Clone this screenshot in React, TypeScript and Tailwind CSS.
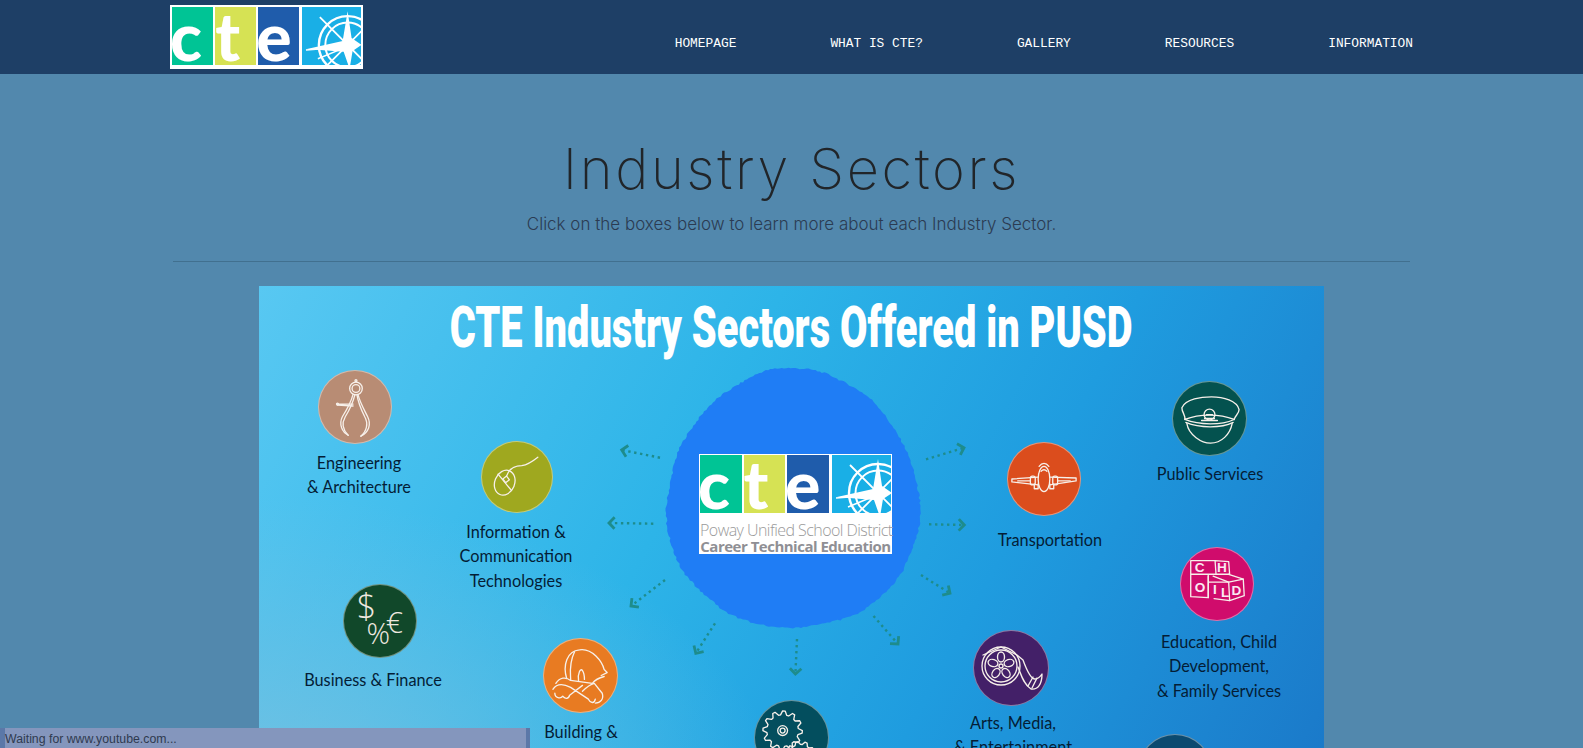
import React from "react";

const navItems = ["HOMEPAGE", "WHAT IS CTE?", "GALLERY", "RESOURCES", "INFORMATION"];

function Compass() {
  const cx = 46;
  const cy = 38;
  return (
    <svg viewBox="0 0 59 58" className="absolute inset-0 w-full h-full">
      <g fill="none" stroke="#fff">
        <circle cx={cx} cy={cy} r="29" strokeWidth="2.4" />
        <circle cx={cx} cy={cy} r="22.5" strokeWidth="2" />
        <path d="M18 10 L60 52 M18 66 L60 24" strokeWidth="1.8" />
        <path d="M4 43 L44 40 M16 52 L40 42" strokeWidth="1.5" />
      </g>
      <polygon points="46,4 50,31 60,38 51,44 48,62 42,45 5,42 41,34" fill="#fff" />
    </svg>
  );
}

function Tiles() {
  const letter = "absolute font-['Lato',sans-serif] font-black text-white text-[66px] leading-[58px]";
  return (
    <div className="flex h-[58px] w-full">
      <div className="relative w-[41.5px] h-full bg-[#00c495]">
        <span className={`${letter} -left-[2px] top-[0px]`}>c</span>
      </div>
      <div className="relative ml-[2px] w-[41.5px] h-full bg-[#d6e254]">
        <span className={`${letter} left-[0px] top-[0px]`}>t</span>
      </div>
      <div className="relative ml-[2px] w-[41.5px] h-full bg-[#1f5cab]">
        <span className={`${letter} -left-[2px] top-[0px]`}>e</span>
      </div>
      <div className="relative ml-[3px] w-[59px] h-full bg-[#19afe6] overflow-hidden">
        <Compass />
      </div>
    </div>
  );
}

function Sketch({ children }: { children: React.ReactNode }) {
  return (
    <svg viewBox="-37 -37 74 74" className="w-full h-full" fill="none" stroke="#f7f0ea" strokeWidth="1.35" strokeLinecap="round" strokeLinejoin="round">
      {children}
    </svg>
  );
}

function gearPath(cx: number, cy: number, r: number, teeth: number) {
  const pts: string[] = [];
  for (let i = 0; i < teeth * 4; i++) {
    const a = (i / (teeth * 4)) * Math.PI * 2;
    const rad = i % 4 < 2 ? r : r * 0.8;
    pts.push(`${(cx + Math.cos(a) * rad).toFixed(1)},${(cy + Math.sin(a) * rad).toFixed(1)}`);
  }
  return pts.join(" ");
}

const caliper = (
  <Sketch>
    <circle cx="1" cy="-19" r="6.5" />
    <circle cx="1" cy="-19" r="4" />
    <circle cx="1" cy="-27" r="1" />
    <path d="M-2 -13 C-4 -5 -8 2 -13 10 C-17 18 -13 26 -7 29" />
    <path d="M0 -13 C-2 -5 -5 2 -10 10 C-14 17 -12 24 -7 29" />
    <path d="M3 -13 C5 -5 9 2 13 10 C17 18 14 26 6 30" />
    <path d="M2 -13 C3 -5 6 2 10 10 C14 17 12 25 6 30" />
    <path d="M-18 -3 L-2 -3 M-18 -2 L-2 -1" />
    <circle cx="-18" cy="-3" r="1" />
  </Sketch>
);

const mouse = (
  <Sketch>
    <ellipse cx="-13" cy="6" rx="10.5" ry="13.5" transform="rotate(22 -13 6)" />
    <path d="M-20 -3 L-6 14" />
    <path d="M-15 2 L-11 -1 L-8 3 L-12 6 Z" />
    <path d="M-11 -1 C-8 -10 0 -12 5 -12 C11 -13 17 -17 22 -21" />
  </Sketch>
);

const money = (
  <Sketch>
    <g stroke="none" fill="#efe9e0" fontFamily="'Open Sans', sans-serif" fontWeight="300">
      <text x="-24" y="-2" fontSize="35">$</text>
      <text x="-14" y="24" fontSize="30">%</text>
      <text x="6" y="12" fontSize="31">€</text>
    </g>
  </Sketch>
);

const helmet = (
  <Sketch>
    <path d="M-14 3 C-18 -10 -14 -25 -1 -26 C12 -28 22 -14 24 -6 L27 -3 L21 0" />
    <path d="M-6 -24 C-12 -12 -10 0 -10 4 M-2 5 C-3 -2 0 -8 2 -5 C4 -2 4 2 4 4" />
    <path d="M-25 8 C-21 2 -15 1 -10 5 L12 8 C15 4 20 2 24 1" />
    <path d="M-28 14 C-24 8 -18 8 -10 12 L8 24 C10 28 14 29 15 24 M-26 18 C-26 23 -20 24 -18 21 C-16 24 -12 24 -11 20 L2 10" />
    <path d="M2 16 C6 12 10 9 14 8 L22 18 C24 24 20 28 15 28" />
  </Sketch>
);

const plane = (
  <Sketch>
    <ellipse cx="0" cy="0" rx="6" ry="13" />
    <path d="M-3 -8 C-1 -10 1 -10 3 -8 M-5 -13 C-2 -17 2 -17 5 -13" />
    <path d="M-6 -2 L-33 0 L-33 3 L-6 6 M6 -2 L33 -1 L33 2 L6 6" />
    <rect x="-14" y="-3" width="5" height="9" rx="2" />
    <rect x="9" y="-3" width="5" height="9" rx="2" />
    <path d="M-10 5 L-10 10 L-6 10 L-6 5 M6 5 L6 10 L10 10 L10 5 M-27 2 L-14 2 M14 2 L27 2" />
  </Sketch>
);

const cap = (
  <Sketch>
    <path d="M-28 -11 C-24 -20 -8 -22 2 -22 C14 -22 28 -18 30 -9 C30 -5 26 -3 25 1 C10 -5 -10 -5 -25 1 C-24 -3 -28 -6 -28 -11 Z" />
    <path d="M-25 1 C-10 7 12 7 25 1 M-24 4 C-10 10 12 10 24 4" />
    <path d="M-23 5 C-21 17 -8 25 1 25 C12 25 21 16 23 5" />
    <circle cx="0" cy="-4" r="5.5" />
    <path d="M-5 0 L5 0 M-3 -4 L3 -4 M-8 2 L8 2" />
  </Sketch>
);

const blocks = (
  <Sketch>
    <path d="M-27 -24 L-2 -24 L-1 -10 L-27 -10 Z M-27 -10 L-27 13 L-9 14 L-9 -10 M-2 -24 L12 -23 L13 -10 L-1 -10" />
    <path d="M-9 -8 L-9 14 M-9 -2 L12 -2 L27 -5 L28 12 L13 17 L-3 15" />
    <path d="M12 -2 L13 17 M12 -2 L-4 -8 M12 -10 L27 -5" />
    <g stroke="none" fill="#fbe9f2" fontFamily="'Liberation Sans', sans-serif" fontWeight="700" fontSize="14">
      <text x="-23" y="-12">C</text>
      <text x="0" y="-12">H</text>
      <text x="-23" y="8">O</text>
      <text x="-4" y="10">I</text>
      <text x="4" y="13">L</text>
      <text x="15" y="11">D</text>
    </g>
  </Sketch>
);

const film = (
  <Sketch>
    <circle cx="-10" cy="-2" r="19" />
    <circle cx="-10" cy="-2" r="16" />
    <circle cx="-10" cy="-2" r="2" />
    <ellipse cx="-10" cy="-11" rx="3.5" ry="5" />
    <ellipse cx="-2" cy="-5" rx="3.5" ry="5" transform="rotate(72 -2 -5)" />
    <ellipse cx="-5" cy="5" rx="3.5" ry="5" transform="rotate(-36 -5 5)" />
    <ellipse cx="-15" cy="5" rx="3.5" ry="5" transform="rotate(36 -15 5)" />
    <ellipse cx="-18" cy="-5" rx="3.5" ry="5" transform="rotate(-72 -18 -5)" />
    <path d="M-28 -13 L-10 -21 L6 -13 L12 -8 C16 3 20 11 24 11 C27 11 29 9 31 6 C31 16 27 22 20 21 C12 16 10 6 7 -1" />
    <path d="M17 18 L22 9 M21 20 L26 10" />
  </Sketch>
);

const gears = (
  <Sketch>
    <polygon points={gearPath(-9, -7, 20, 12)} />
    <circle cx="-9" cy="-7" r="5" />
    <circle cx="-9" cy="-7" r="2.5" />
    <polygon points={gearPath(9, 19, 15, 10)} />
    <circle cx="9" cy="19" r="4" />
  </Sketch>
);

const circles = [
  { c: "left-[59px] top-[84px] w-[74px] h-[74px] bg-[#b88c74]", icon: caliper },
  { c: "left-[222px] top-[155px] w-[72px] h-[72px] bg-[#9fa81f]", icon: mouse },
  { c: "left-[84px] top-[298px] w-[74px] h-[74px] bg-[#11482a]", icon: money },
  { c: "left-[284px] top-[352px] w-[75px] h-[75px] bg-[#e87b22]", icon: helmet },
  { c: "left-[748px] top-[156px] w-[74px] h-[74px] bg-[#db4d1d]", icon: plane },
  { c: "left-[913px] top-[95px] w-[75px] h-[75px] bg-[#04524f]", icon: cap },
  { c: "left-[921px] top-[261px] w-[74px] h-[74px] bg-[#d00c6c]", icon: blocks },
  { c: "left-[714px] top-[344px] w-[76px] h-[76px] bg-[#432068]", icon: film },
  { c: "left-[495px] top-[414px] w-[75px] h-[75px] bg-[#034e5e]", icon: gears },
  { c: "left-[879px] top-[448px] w-[74px] h-[74px] bg-[#0b4a70]", icon: null },
];

const labels = [
  { c: "left-[100px] top-[189px]", t: ["Engineering", "& Architecture"] },
  { c: "left-[257px] top-[271px]", t: ["Information &", "Communication", "Technologies"] },
  { c: "left-[114px] top-[394px]", t: ["Business & Finance"] },
  { c: "left-[322px] top-[446px]", t: ["Building &"] },
  { c: "left-[791px] top-[254px]", t: ["Transportation"] },
  { c: "left-[951px] top-[188px]", t: ["Public Services"] },
  { c: "left-[960px] top-[381px]", t: ["Education, Child", "Development,", "& Family Services"] },
  { c: "left-[754px] top-[449px]", t: ["Arts, Media,", "& Entertainment"] },
];

const arrows: number[][] = [
  [401, 171.7, 362.7, 164],
  [394.3, 237.7, 350, 237],
  [406, 294, 372, 320],
  [456, 337.3, 436.8, 367.3],
  [538, 353, 536.4, 388],
  [614.5, 330, 639, 358],
  [662, 289, 691, 307.3],
  [670, 238.3, 705.3, 239],
  [667, 173.3, 705, 161.7],
];

function Arrow({ a }: { a: number[] }) {
  const [x1, y1, x2, y2] = a;
  const ang = Math.atan2(y2 - y1, x2 - x1);
  const hx = (d: number) => x2 - 8 * Math.cos(ang + d);
  const hy = (d: number) => y2 - 8 * Math.sin(ang + d);
  return (
    <g fill="none" stroke="#1e8c8c">
      <line x1={x1} y1={y1} x2={x2} y2={y2} strokeWidth="2.4" strokeDasharray="2.4 3.6" />
      <path d={`M${hx(0.8)} ${hy(0.8)} L${x2} ${y2} L${hx(-0.8)} ${hy(-0.8)}`} strokeWidth="2.8" />
    </g>
  );
}

function blobPoints() {
  const pts: string[] = [];
  const n = 320;
  for (let i = 0; i < n; i++) {
    const t = (i / n) * Math.PI * 2;
    const h = Math.sin(i * 12.9898) * 43758.5453;
    const noise = h - Math.floor(h) - 0.5;
    const wob = 1 + 0.014 * noise + 0.005 * Math.sin(7 * t + 1) + 0.004 * Math.sin(13 * t);
    const s = Math.sin(t);
    const widen = 1 + 0.09 * s;
    const x = 534 + 126 * Math.cos(t) * widen * wob;
    const y = 212 + 130 * s * wob;
    pts.push(`${x.toFixed(1)},${y.toFixed(1)}`);
  }
  return pts.join(" ");
}

export default function App() {
  return (
    <div className="relative h-[748px] w-full overflow-hidden bg-[#5288ad]">
      <header className="flex h-[74px] items-center justify-between bg-[#1e3f66] pl-[170px] pr-[170px]">
        <div className="h-[64px] w-[193px] bg-white px-[2px] pt-[2px]">
          <Tiles />
        </div>
        <nav className="flex gap-[94px] pt-[14px] font-['Liberation_Mono',monospace] text-[12.85px] font-normal leading-[18px] text-white">
          {navItems.map((n) => (
            <span key={n}>{n}</span>
          ))}
        </nav>
      </header>

      <div className="flex flex-col items-center">
        <h1 className="mt-[59px] font-['Inter',sans-serif] text-[56px] font-extralight leading-[72px] tracking-[2.6px] text-[#212529]">Industry Sectors</h1>
        <p className="mt-[7px] font-['Inter',sans-serif] text-[17px] font-light leading-[24px] text-[#2b3b52]">
          Click on the boxes below to learn more about each Industry Sector.
        </p>
      </div>
      <hr className="mx-[173px] mt-[25px] border-t border-[#41708f]" />

      <div className="relative ml-[259px] mt-[24px] h-[600px] w-[1065px] bg-[radial-gradient(ellipse_520px_300px_at_0%_85%,#72c1e2_0%,rgba(114,193,226,0)_100%),linear-gradient(118deg,#58c8f2_0%,#2db4e8_38%,#1f9cdf_64%,#1a74c6_100%)]">
        <div className="absolute left-[0px] top-[14px] w-full text-center">
          <span className="inline-block origin-center scale-x-[0.698] whitespace-nowrap font-['Roboto',sans-serif] text-[57px] font-black leading-[56px] text-white">
            CTE Industry Sectors Offered in PUSD
          </span>
        </div>

        <svg viewBox="0 0 1065 600" className="absolute inset-0 h-full w-full">
          <polygon points={blobPoints()} fill="#1f7df5" />
          {arrows.map((a, i) => (
            <Arrow key={i} a={a} />
          ))}
        </svg>

        <div className="absolute left-[440px] top-[168px] h-[100px] w-[193px] bg-white px-[1px] pt-[1px]">
          <Tiles />
          <div className="mt-[7px] whitespace-nowrap text-center font-['Open_Sans',sans-serif] text-[16px] font-light leading-[20px] tracking-[-0.55px] text-[#9a9a9a]">
            Poway Unified School District
          </div>
          <div className="-mt-[2px] whitespace-nowrap text-center font-['Open_Sans',sans-serif] text-[15px] font-bold leading-[17px] tracking-[-0.5px] text-[#8f8f94]">
            Career Technical Education
          </div>
        </div>

        {circles.map((c, i) => (
          <div key={i} className={`absolute rounded-full border border-white/40 ${c.c}`}>
            {c.icon}
          </div>
        ))}

        {labels.map((l) => (
          <div
            key={l.t[0]}
            className={`absolute -translate-x-1/2 -translate-y-1/2 whitespace-nowrap text-center font-['Lato',sans-serif] text-[16.3px] leading-[24.4px] text-[#041d36] ${l.c}`}
          >
            {l.t.map((t) => (
              <div key={t}>{t}</div>
            ))}
          </div>
        ))}
      </div>

      <div className="absolute bottom-0 left-0 h-[20px] w-[530px] bg-[#5b78a8] pr-[4px] pl-[5px]">
        <div className="h-full bg-[#8496bd] font-['Liberation_Sans',sans-serif] text-[12.3px] leading-[22px] text-[#2f3a4f]">
          Waiting for www.youtube.com...
        </div>
      </div>
    </div>
  );
}
